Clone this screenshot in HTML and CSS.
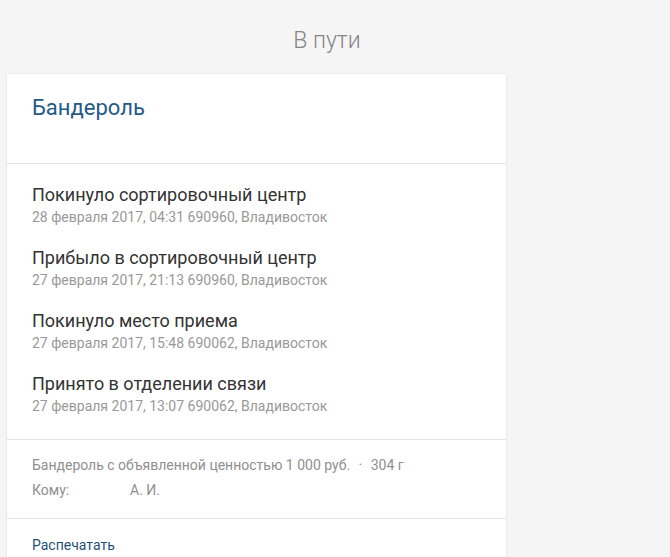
FILE: index.html
```html
<!DOCTYPE html>
<html lang="ru">
<head>
<meta charset="utf-8">
<title>В пути</title>
<link rel="stylesheet" href="styles.css">
</head>
<body>
<div class="page">
  <h1 class="status">В пути</h1>
  <div class="card">
    <div class="card-head">
      <h2 class="parcel">Бандероль</h2>
    </div>
    <ul class="events">
      <li class="event">
        <div class="event-title">Покинуло сортировочный центр</div>
        <div class="event-meta">28 февраля 2017, 04:31 690960, Владивосток</div>
      </li>
      <li class="event">
        <div class="event-title">Прибыло в сортировочный центр</div>
        <div class="event-meta">27 февраля 2017, 21:13 690960, Владивосток</div>
      </li>
      <li class="event">
        <div class="event-title">Покинуло место приема</div>
        <div class="event-meta">27 февраля 2017, 15:48 690062, Владивосток</div>
      </li>
      <li class="event">
        <div class="event-title">Принято в отделении связи</div>
        <div class="event-meta">27 февраля 2017, 13:07 690062, Владивосток</div>
      </li>
    </ul>
    <div class="info">
      <div class="info-line">Бандероль с объявленной ценностью 1 000 руб. <span class="dot">·</span> 304 г</div>
      <div class="info-line"><span class="label">Кому:</span><span>А. И.</span></div>
    </div>
    <div class="actions">
      <a class="print" href="#">Распечатать</a>
    </div>
  </div>
</div>
</body>
</html>
```

FILE: styles.css
```css
html, body {
  margin: 0;
  padding: 0;
  background: #f5f5f5;
  font-family: Roboto, "Liberation Sans", sans-serif;
  overflow: hidden;
}
.page {
  width: 499px;
  padding: 0 0 0 7px;
}
.status {
  margin: 0;
  width: 640px;
  height: 74px;
  display: flex;
  align-items: center;
  justify-content: center;
  font-weight: 300;
  font-size: 23px;
  color: #858585;
  padding-top: 6px;
  box-sizing: border-box;
}
.card {
  background: #fff;
  box-shadow: 0 0 2px rgba(0,0,0,0.12);
}
.card-head {
  height: 90px;
  box-sizing: border-box;
  padding: 20px 25px 0;
  border-bottom: 1px solid #e4e4e4;
}
.parcel {
  margin: 0;
  font-size: 22px;
  font-weight: 400;
  color: #245a87;
  line-height: 28px;
}
.events {
  list-style: none;
  margin: 0;
  padding: 19px 25px 4px;
  border-bottom: 1px solid #e4e4e4;
}
.event {
  height: 63px;
}
.event-title {
  font-size: 18px;
  color: #333;
  line-height: 24px;
}
.event-meta {
  font-size: 14px;
  color: #999;
  line-height: 20px;
  font-weight: 400;
}
.info {
  padding: 13px 25px 15px;
  border-bottom: 1px solid #e4e4e4;
}
.info-line {
  font-size: 14px;
  color: #8f8f8f;
  line-height: 25px;
}
.dot {
  margin: 0 5px;
}
.label {
  display: inline-block;
  width: 98px;
}
.actions {
  padding: 16px 25px 10px;
}
.print {
  font-size: 14px;
  color: #1f4f7a;
  text-decoration: none;
}
```
